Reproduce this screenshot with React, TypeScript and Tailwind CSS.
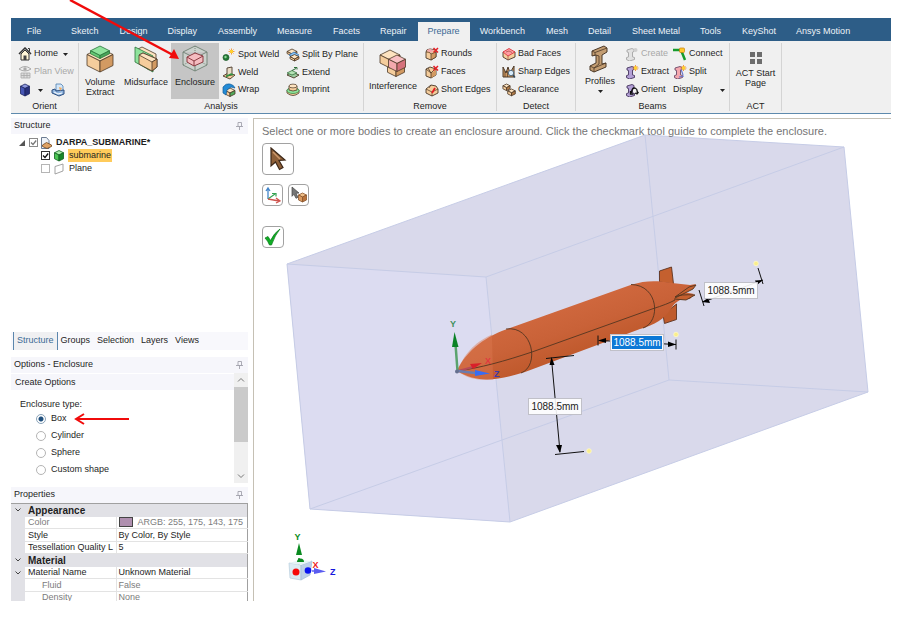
import type { ReactNode } from "react";
import clsx from "clsx";

const PEACH = "#f5cd9c";
const LIGHT = "#fde3c0";
const TAN = "#d29a62";
const INK = "#4b3827";
const GREEN = "#8fe39c";
const PINK = "#f3a9ae";

type BoxProps = { x: number; y: number; w: number; h: number; top?: string; left?: string; right?: string; stroke?: string; sw?: number };

/* Isometric block: x,y is the top corner, w the half width, h the side height. */
function Block({ x, y, w, h, top = LIGHT, left = PEACH, right = TAN, stroke = INK, sw = 0.8 }: BoxProps) {
  const d = w / 2;
  return (
    <g stroke={stroke} strokeWidth={sw} strokeLinejoin="round">
      <path d={`M${x} ${y}l${w} ${d}l${-w} ${d}l${-w} ${-d}z`} fill={top} />
      <path d={`M${x - w} ${y + d}l${w} ${d}v${h}l${-w} ${-d}z`} fill={left} />
      <path d={`M${x + w} ${y + d}l${-w} ${d}v${h}l${w} ${-d}z`} fill={right} />
    </g>
  );
}

function Small({ children }: { children: ReactNode }) {
  return <svg viewBox="0 0 14 14" className="h-[14px] w-[14px] shrink-0" aria-hidden="true">{children}</svg>;
}

function Spark({ x, y }: { x: number; y: number }) {
  return (
    <g>
      <path d={`M${x} ${y - 3}v6M${x - 3} ${y}h6M${x - 2} ${y - 2}l4 4M${x + 2} ${y - 2}l-4 4`} stroke="#f07d1c" strokeWidth="0.8" />
      <circle cx={x} cy={y} r="1.7" fill="#ffd22e" />
    </g>
  );
}

function Beam({ tone, edge }: { tone: string; edge: string }) {
  return (
    <path d="M2 3l5-1.5 2 1v2l-1.5.6v4.8l2 .6v2l-5 1.5-3-1.4v-2l2-.7V5.5L2 5z" fill={tone} stroke={edge} strokeWidth="0.9" strokeLinejoin="round" />
  );
}

const icons = {
  home: (
    <Small>
      <path d="M1 7l6-6 6 6" fill="none" stroke="#333" strokeWidth="1.5" />
      <path d="M3 7l4-4 4 4v6H3z" fill="#fff6d8" stroke="#333" strokeWidth="1" />
      <path d="M5.5 8.500h3V13h-3z" fill="#444" /><path d="M10 1.500h1.500v3" stroke="#333" fill="none" />
    </Small>
  ),
  plan: (
    <Small>
      <path d="M1 4q6-5 12 0q-6 4-12 0z" fill="#eee" stroke="#aaa" /><circle cx="7" cy="4" r="1.700" fill="#aaa" />
      <path d="M3 8h9v5H3zM3 10.500h9M6 8v5M9 8v5" fill="#ddd" stroke="#aaa" strokeWidth="0.8" />
    </Small>
  ),
  blueBox: (
    <Small><Block x={7} y={1} w={4.500} h={7.500} top="#8d98dd" left="#4656b5" right="#27307c" stroke="#1c235e" /></Small>
  ),
  viewBox: (
    <Small>
      <path d="M5 1h5l2 2v5H5z" fill="#d3e6f8" stroke="#4d7fb0" strokeWidth="0.800" />
      <path d="M1 7l3-1 1 2 8-1v4l-5 2-7-3z" fill="#8fb4de" stroke="#2d4f80" strokeWidth="1" />
      <path d="M3 9l4 2 4-1" stroke="#fff" fill="none" /><path d="M8 4l3 1-2 3z" fill="#f2a95c" />
    </Small>
  ),
  spot: (
    <Small>
      <circle cx="4" cy="9.500" r="3" fill="#237a35" stroke="#185425" strokeWidth="0.700" /><circle cx="3.500" cy="9" r="1.200" fill="#8fd49a" />
      <Spark x={9.500} y={3.500} />
    </Small>
  ),
  weld: (
    <Small>
      <path d="M1 10l5-3 7 2-5 4z" fill={PEACH} stroke={INK} strokeWidth="0.900" />
      <path d="M5 2l5-1v8L5 10z" fill="#e9dcc6" stroke={INK} strokeWidth="0.900" /><path d="M4 10.500l5-2.500 2 1" stroke="#2f9442" strokeWidth="1.400" fill="none" />
    </Small>
  ),
  wrap: (
    <Small>
      <Block x={8} y={5} w={5} h={3.500} right="#4fab5a" />
      <path d="M1 4q3-4 7-3 4 1 5 4l-4-1-4 3-1 5-3-2z" fill="#238bd6" stroke="#155d96" strokeWidth="0.700" />
    </Small>
  ),
  split: (
    <Small>
      <Block x={6} y={1} w={5} h={2} /><path d="M3 7l5-3 5 3-5 2.500z" fill="#8ac2f3" stroke="#2d6daa" strokeWidth="0.700" /><Block x={8.500} y={6.500} w={4.500} h={2} />
    </Small>
  ),
  extend: (
    <Small>
      <path d="M1 9l5-3 7 3-5 3z" fill="#9dcda0" stroke={INK} strokeWidth="0.900" />
      <path d="M1 7l5-2.500 5 2.500-5 2z" fill="#b5e3b5" stroke="#35713d" strokeWidth="0.800" /><path d="M6 4.500l4-2M8 1.500h3v2" stroke="#2c6c36" fill="none" />
    </Small>
  ),
  imprint: (
    <Small>
      <path d="M1 7v3q6 5 12 0V7z" fill={PEACH} stroke={INK} strokeWidth="0.800" /><ellipse cx="7" cy="7.500" rx="6" ry="3" fill="#8fe39c" stroke="#378a45" strokeWidth="0.800" />
      <path d="M3 3v4q4 2 8 0V3z" fill={PEACH} stroke={INK} strokeWidth="0.800" /><ellipse cx="7" cy="3" rx="4" ry="1.900" fill={LIGHT} stroke={INK} strokeWidth="0.700" />
    </Small>
  ),
  rounds: (
    <Small>
      <path d="M1 5q0-3 4-3l6 1v7l-5 3-5-2z" fill={PEACH} stroke={INK} strokeWidth="0.900" /><path d="M1 5q4-1 5 2v6l5-3V5L6 7" stroke={INK} strokeWidth="0.700" fill={TAN} /><path d="M2 4q0-2 3-2l4 1-3 3q-1-1-4-2z" fill={PINK} />
      <path d="M8.500 1l4.500 4.500m0-4.500l-4.500 4.500" stroke="#e51e25" strokeWidth="1.500" />
    </Small>
  ),
  faces: (
    <Small>
      <path d="M1 4l4-2 6 2v6l-5 3-5-2z" fill={PEACH} stroke={INK} strokeWidth="0.900" /><path d="M6 13V8l5-3v5z" fill={TAN} /><path d="M1 4l5 4v5M6 8l4-4M3 3l3 5" stroke={INK} strokeWidth="0.800" fill="none" />
      <path d="M8.500 1l4.500 4.500m0-4.500l-4.500 4.500" stroke="#e51e25" strokeWidth="1.500" />
    </Small>
  ),
  edges: (
    <Small>
      <path d="M1 6l5-4 5 1 2 3v4l-6 3-6-3z" fill={PEACH} stroke={INK} strokeWidth="0.900" /><path d="M1 6l6 3v4M7 9l6-3M6 2L4 5" stroke={INK} strokeWidth="0.700" fill="none" />
      <path d="M7 10l3-5" stroke="#e51e25" strokeWidth="1.800" />
    </Small>
  ),
  bad: (
    <Small>
      <path d="M1 5v5l5 3 7-3V5z" fill={PEACH} stroke={INK} strokeWidth="0.900" />
      <path d="M1 5l6-3.500L13 5 6 9z" fill="#ff9da2" stroke="#d9373f" strokeWidth="0.900" /><path d="M4 5l3-1 3 1.500M6 9v4" stroke="#a34b3f" strokeWidth="0.700" fill="none" />
    </Small>
  ),
  sharp: (
    <Small>
      <path d="M1 12V2l3 6 2-6 2 6 4-7v11z" fill={TAN} stroke={INK} strokeWidth="1" /><path d="M3 6v6M5.500 6v6" stroke={INK} strokeWidth="0.700" />
      <circle cx="9" cy="8" r="2.700" fill="#d8ecfb" stroke="#4d6477" strokeWidth="0.900" /><path d="M11 10l2 2.500" stroke="#33495b" strokeWidth="1.500" />
    </Small>
  ),
  clearance: <Small><Block x={4.500} y={1} w={3.600} h={3} right="#b27a45" /><Block x={9.500} y={6} w={3.800} h={3} right="#b27a45" /></Small>,
  create: <Small><Beam tone="#e2e2e2" edge="#a5a5a5" /><circle cx="10.500" cy="3" r="2" fill="#cfcfcf" /></Small>,
  extract: <Small><Beam tone="#b3a0d6" edge="#45345f" /><Spark x={10.500} y={3} /></Small>,
  orient: <Small><Beam tone="#b3a0d6" edge="#45345f" /><path d="M6.500 10q0-5 3.500-5 3 1 2 5M5.500 8v3h3M10 10l2 1 1.500-2" stroke="#111" strokeWidth="1.300" fill="none" /></Small>,
  connect: (
    <Small><path d="M0 3h8l4 10" stroke="#179b2c" strokeWidth="2.500" fill="none" /><rect x="6.500" y="1" width="5" height="4.500" rx="1" fill="#ffc92b" stroke="#c77c0d" strokeWidth="0.700" /></Small>
  ),
  splitBeam: <Small><Beam tone="#f4a8ae" edge="#6c4868" /><path d="M8 4l2 6M6 12l5-1" stroke="#6a78ce" strokeWidth="1.200" /><Spark x={10.500} y={3} /></Small>,
};

type IconName = keyof typeof icons;

function Tool({ icon, label, caret, muted }: { icon?: IconName; label: string; caret?: boolean; muted?: boolean }) {
  return (
    <button type="button" disabled={muted} className={clsx("flex h-[18px] items-center gap-[2px] whitespace-nowrap", muted && "text-[#a8a8a8]")}>
      {icon && icons[icon]}
      <span>{label}</span>
      {caret && <Caret />}
    </button>
  );
}

function Caret() {
  return <svg viewBox="0 0 5 3" className="ml-[3px] h-[3px] w-[5px]" aria-hidden="true"><path d="M0 0h5L2.500 3z" fill="#222" /></svg>;
}

function BigTool({ label, width, active, children, caret }: { label: string; width: string; active?: boolean; children: ReactNode; caret?: boolean }) {
  return (
    <button type="button" className={clsx("flex h-[56px] flex-col items-center leading-[10px]", width, active && "bg-[#c5c5c5]")}>
      {children}
      <span className="flex flex-col items-center">{label}</span>
      {caret && <svg viewBox="0 0 5 3" className="mt-1 h-[3px] w-[5px]" aria-hidden="true"><path d="M0 0h5L2.500 3z" fill="#222" /></svg>}
    </button>
  );
}

function Group({ name, width, children }: { name: string; width: string; children: ReactNode }) {
  return (
    <section aria-label={name} className={clsx("my-[2px] flex shrink-0 flex-col border-r border-[#d4d4d4]", width)}>
      <div className="flex h-[56px]">{children}</div>
      <div className="h-[13px] text-center leading-[15px]">{name}</div>
    </section>
  );
}

const tabs = ["Sketch", "Design", "Display", "Assembly", "Measure", "Facets", "Repair", "Prepare", "Workbench", "Mesh", "Detail", "Sheet Metal", "Tools", "KeyShot", "Ansys Motion"];

function Ribbon() {
  return (
    <header>
      <nav className="flex h-[23px] items-end bg-[#2d5d87] text-[#eef3f8]">
        <button type="button" className="h-[19px] w-[50px] pr-[4px]">File</button>
        {tabs.map((t) => (
          <button type="button" key={t} className={clsx("h-[19px] px-[10px] whitespace-nowrap even:pr-[11px]", t === "Prepare" && "bg-[#f0f0f0] text-[#3b6a95]")}>{t}</button>
        ))}
      </nav>
      <div className="flex h-[73px] border-b border-[#5e8aad] bg-[#f0f0f0]">
        <Group name="Orient" width="w-[68px]">
          <div className="flex flex-col pt-[2px] pl-[7px]">
            <Tool icon="home" label="Home" caret />
            <Tool icon="plan" label="Plan View" muted />
            <div className="flex h-[18px] items-center gap-2">
              <button type="button" aria-label="View cube" className="flex items-center gap-[3px]">{icons.blueBox}<Caret /></button>
              <button type="button" aria-label="Snap view">{icons.viewBox}</button>
            </div>
          </div>
        </Group>
        <Group name="Analysis" width="w-[285px]">
          <BigTool label="Volume Extract" width="w-[42px]">
            <svg viewBox="0 0 30 34" className="h-[34px] w-[30px] shrink-0" aria-hidden="true">
              <Block x={15} y={5} w={13} h={11} />
              <Block x={15} y={3} w={9.500} h={3} top={GREEN} left="#66ca76" right="#4aa65b" stroke="#28733a" />
            </svg>
          </BigTool>
          <BigTool label="Midsurface" width="w-[50px]">
            <svg viewBox="0 0 30 34" className="h-[34px] w-[30px] shrink-0" aria-hidden="true">
              <g stroke={INK} strokeWidth="0.8" strokeLinejoin="round">
                <path d="M5 7l6-3 14 7v12l-7 4L5 18z" fill={LIGHT} />
                <path d="M4 4l18 9v16L4 19z" fill={GREEN} stroke="#28733a" />
                <path d="M8 12l4-2 14 6v8l-5 4L8 21z" fill={PEACH} />
                <path d="M8 12l4-2 14 6-5 3z" fill={LIGHT} /><path d="M21 19l5-3v8l-5 4z" fill={TAN} />
              </g>
            </svg>
          </BigTool>
          <BigTool label="Enclosure" width="w-[48px]" active>
            <svg viewBox="0 0 30 34" className="h-[34px] w-[30px] shrink-0" aria-hidden="true">
              <g fill="none" stroke="#6e8073" strokeWidth="0.9" strokeLinejoin="round">
                <path d="M15 3l12 6v13l-12 6-12-6V9zM3 9l12 6 12-6M15 15v13" fill="#ccd2cd" />
                <path d="M3 22l12-6 12 6M15 3v12" strokeDasharray="1 1" />
              </g>
              <path d="M7 14l8-4 8 3v6l-9 4-7-4z" fill="#f5bcc0" stroke="#8b3940" /><path d="M7 14l7 4 9-5M14 18v5" fill="none" stroke="#8b3940" />
            </svg>
          </BigTool>
          <div className="flex w-[63px] flex-col pt-[3px] pl-[3px]">
            <Tool icon="spot" label="Spot Weld" /><Tool icon="weld" label="Weld" /><Tool icon="wrap" label="Wrap" />
          </div>
          <div className="flex flex-col pt-[3px] pl-[4px]">
            <Tool icon="split" label="Split By Plane" /><Tool icon="extend" label="Extend" /><Tool icon="imprint" label="Imprint" />
          </div>
        </Group>
        <Group name="Remove" width="w-[133px]">
          <BigTool label="Interference" width="w-[58px]">
            <svg viewBox="0 0 30 38" className="h-[38px] w-[30px] shrink-0" aria-hidden="true">
              <Block x={18} y={18} w={8.500} h={7} /><Block x={12} y={7} w={10} h={8} />
              <Block x={19} y={12} w={8.500} h={8} top="#f9c0c4" left={PINK} right="#d5727c" />
            </svg>
          </BigTool>
          <div className="flex flex-col pt-[2px] pl-[3px]">
            <Tool icon="rounds" label="Rounds" /><Tool icon="faces" label="Faces" /><Tool icon="edges" label="Short Edges" />
          </div>
        </Group>
        <Group name="Detect" width="w-[79px]">
          <div className="flex flex-col pt-[2px] pl-[5px]">
            <Tool icon="bad" label="Bad Faces" /><Tool icon="sharp" label="Sharp Edges" /><Tool icon="clearance" label="Clearance" />
          </div>
        </Group>
        <Group name="Beams" width="w-[154px]">
          <BigTool label="Profiles" width="w-[48px]" caret>
            <svg viewBox="0 0 30 33" className="h-[33px] w-[30px] shrink-0" aria-hidden="true">
              <path d="M7 8l12-5 3 2v4l-5 3v9l4-1v4L9 29l-4-2v-4l6-3V12l-4 1z" fill="#c39d72" stroke={INK} strokeWidth="1" strokeLinejoin="round" />
              <path d="M7 8l3 1.500L22 5M10 9.500v3M11 12l3 1v8l-5 4v4M5 23l4 2 12-5" fill="none" stroke={INK} strokeWidth="0.800" />
            </svg>
          </BigTool>
          <div className="flex w-[49px] flex-col pt-[2px] pl-[1px]">
            <Tool icon="create" label="Create" muted /><Tool icon="extract" label="Extract" /><Tool icon="orient" label="Orient" />
          </div>
          <div className="flex flex-1 flex-col pt-[2px]">
            <Tool icon="connect" label="Connect" /><Tool icon="splitBeam" label="Split" />
            <button type="button" className="flex h-[18px] items-center justify-between pr-1">Display<Caret /></button>
          </div>
        </Group>
        <Group name="ACT" width="w-[52px]">
          <BigTool label="ACT Start Page" width="w-[51px]">
            <svg viewBox="0 0 12 25" className="h-[25px] w-[12px] shrink-0" aria-hidden="true"><path d="M0 9h5v5H0zM7 9h5v5H7zM0 16h5v5H0zM7 16h5v5H7z" fill="#6d6d6d" /></svg>
          </BigTool>
        </Group>
      </div>
    </header>
  );
}

function PanelHead({ title }: { title: string }) {
  return (
    <div className="flex h-4 shrink-0 items-center justify-between bg-[#f6f6fb] pr-[5px] pl-[3px]">
      <h2>{title}</h2>
      <button type="button" aria-label={`Pin ${title}`}>
        <svg viewBox="0 0 7 8" className="h-[8px] w-[7px]" aria-hidden="true"><path d="M2 .5h3.500v4H2zM0 4.500h7M3.500 4.500V8" fill="none" stroke="#a3a3ad" strokeWidth="0.900" /></svg>
      </button>
    </div>
  );
}

function Tick({ label, checked, faded }: { label: string; checked?: boolean; faded?: boolean }) {
  return (
    <span className="relative flex">
      <input type="checkbox" aria-label={label} defaultChecked={checked} className={clsx("h-[9px] w-[9px] appearance-none border bg-white", faded ? "border-[#8a8a8a]" : checked ? "border-[#333]" : "border-[#b5b5b5]")} />
      {checked && <svg viewBox="0 0 9 9" className="pointer-events-none absolute inset-0" aria-hidden="true"><path d="M2 4.500l2 2L7.200 2.500" fill="none" stroke={faded ? "#777" : "#111"} strokeWidth="1.300" /></svg>}
    </span>
  );
}

function Structure() {
  return (
    <section className="flex min-h-0 flex-1 flex-col">
      <PanelHead title="Structure" />
      <div className="flex-1 pt-[2px]">
        <div className="flex h-[13px] items-center pl-[8px]">
          <svg viewBox="0 0 6 6" className="mr-1 h-[6px] w-[6px]" aria-hidden="true"><path d="M6 0v6H0z" fill="#555" /></svg>
          <Tick label="DARPA_SUBMARINE" checked faded />
          <svg viewBox="0 0 12 12" className="mx-[2px] h-[12px] w-[12px]" aria-hidden="true">
            <path d="M1.500.5h5l2.500 3v8H1.500z" fill="#eef2f8" stroke="#5b6c84" strokeWidth="0.900" /><path d="M2.500 8l4-2.500 5 2.500v1.500L7 11.500 2.500 9.500z" fill="#dfa265" stroke="#70461f" strokeWidth="0.800" />
          </svg>
          <b className="ml-[2px]">DARPA_SUBMARINE*</b>
        </div>
        <div className="flex h-[13px] items-center pl-[30px]">
          <Tick label="submarine" checked />
          <svg viewBox="0 0 12 12" className="mx-[3px] h-[12px] w-[12px]" aria-hidden="true"><Block x={6} y={0.500} w={4.500} h={6} top="#a9eda9" left="#4cc654" right="#17872a" stroke="#0f6120" /></svg>
          <span className="bg-[#ffcb5b] px-px leading-[13px]">submarine</span>
        </div>
        <div className="flex h-[13px] items-center pl-[30px]">
          <Tick label="Plane" />
          <svg viewBox="0 0 12 12" className="mx-[3px] h-[12px] w-[12px]" aria-hidden="true"><path d="M2 3.500L10 1v7L2 11z" fill="#fff" stroke="#999" strokeWidth="0.900" /></svg>
          <span className="px-px">Plane</span>
        </div>
      </div>
      <nav className="mb-[7px] flex h-[18px] items-center gap-[3px] bg-[#f8f8fc] pl-[2px]">
        <button type="button" className="h-[18px] border-x border-[#5b86ad] bg-[#f0f0f2] px-[3px] text-[#3b6a95]">Structure</button>
        <div className="flex gap-[7px]">
          {["Groups", "Selection", "Layers", "Views"].map((t) => <button type="button" key={t}>{t}</button>)}
        </div>
      </nav>
    </section>
  );
}

function Options() {
  return (
    <section>
      <PanelHead title="Options - Enclosure" />
      <div className="flex h-[110px]">
        <div className="flex-1">
          <h3 className="mt-px bg-[#f6f6fb] pl-1 leading-4">Create Options</h3>
          <fieldset className="pt-[8px] pl-[9px]">
            <legend className="float-left w-full leading-[12px]">Enclosure type:</legend>
            <div className="clear-both flex flex-col pl-4">
              {["Box", "Cylinder", "Sphere", "Custom shape"].map((t) => (
                <label key={t} className="flex h-[17px] items-center gap-[5px]">
                  <input type="radio" name="enclosure" defaultChecked={t === "Box"} className="h-[10px] w-[10px] appearance-none rounded-full border border-[#b4b4b4] bg-white checked:border-[#8ba4ba] checked:bg-[radial-gradient(circle,#1f4f7d_0_2px,transparent_3px)]" />
                  {t}
                </label>
              ))}
            </div>
          </fieldset>
        </div>
        <div className="flex w-[14px] flex-col items-center bg-[#f0f0f0]">
          <svg viewBox="0 0 14 14" className="h-[14px] w-[14px]" aria-hidden="true"><path d="M4 8.500l3-3 3 3" fill="none" stroke="#777" /></svg>
          <div className="h-[55px] w-full bg-[#cacaca]" />
          <svg viewBox="0 0 14 14" className="mt-auto h-[14px] w-[14px]" aria-hidden="true"><path d="M4 5.500l3 3 3-3" fill="none" stroke="#777" /></svg>
        </div>
      </div>
    </section>
  );
}

type Row = { name: string; value?: ReactNode; head?: boolean; fold?: boolean; muted?: boolean; indent?: boolean };

const rows: Row[] = [
  { name: "Appearance", head: true, fold: true },
  { name: "Color", muted: true, value: <span className="flex items-center gap-[5px]"><i className="h-[10px] w-[14px] border border-[#444] bg-[#af8faf]" />ARGB: 255, 175, 143, 175</span> },
  { name: "Style", value: "By Color, By Style" },
  { name: "Tessellation Quality L", value: "5" },
  { name: "Material", head: true, fold: true },
  { name: "Material Name", value: "Unknown Material", fold: true },
  { name: "Fluid", value: "False", muted: true, indent: true },
  { name: "Density", value: "None", muted: true, indent: true },
];

function Properties() {
  return (
    <section className="mt-[4px] h-[114px] shrink-0 overflow-hidden">
      <PanelHead title="Properties" />
      <table className="w-full table-fixed border-collapse border-t border-r border-[#a0a0a0] text-left">
        <colgroup><col className="w-[14px]" /><col className="w-[91px]" /><col /></colgroup>
        <tbody>
          {rows.map((r) => (
            <tr key={r.name} className={clsx("h-[13px] leading-[11px] even:h-[12px]", r.muted && "text-[#7c7c7c]")}>
              <td className="bg-[#e1e1e6] p-0 text-center">
                {r.fold && <svg viewBox="0 0 6 4" className="mx-auto h-[4px] w-[6px]" aria-hidden="true"><path d="M.5.500L3 3 5.500.500" fill="none" stroke="#444" /></svg>}
              </td>
              {r.head ? (
                <th colSpan={2} className="bg-[#e1e1e6] p-0 pl-[3px] text-[10px]">{r.name}</th>
              ) : (
                <>
                  <td className={clsx("overflow-hidden border-r border-b border-[#e3e3e3] p-0 whitespace-nowrap", r.indent ? "pl-[17px]" : "pl-[3px]")}>{r.name}</td>
                  <td className="overflow-hidden border-b border-[#e3e3e3] p-0 pl-[2px] whitespace-nowrap">{r.value}</td>
                </>
              )}
            </tr>
          ))}
        </tbody>
      </table>
    </section>
  );
}

function Scene() {
  return (
    <svg viewBox="254 119 637 482" className="absolute top-0 left-0 h-[482px] w-[637px]" role="img" aria-label="Submarine inside a box enclosure">
      <defs>
        <linearGradient id="hull" gradientUnits="userSpaceOnUse" x1="560" y1="300" x2="580" y2="360">
          <stop offset="0" stopColor="#d1693f" /><stop offset="0.500" stopColor="#c96238" /><stop offset="1" stopColor="#bd5729" />
        </linearGradient>
      </defs>
      <path d="M287 264L645 135l199 12 24 245-358 130-200-13z" fill="#d9d9eb" />
      <path d="M287 264l199 13 24 245-200-13z" fill="#dcdcf1" />
      <g fill="none" stroke="#c6cce6" strokeWidth="1">
        <path d="M287 264l199 13 24 245-200-13zM486 277L844 147M310 509l359-129 199 12M645 135l24 245M287 264L645 135l199 12 24 245-358 130" />
      </g>
      <g stroke="#5d3320" strokeWidth="0.9" strokeLinejoin="round">
        <path d="M659.500 271l12-4 2 17-14-2z" fill="#c4602f" />
        <path d="M663 315l1.500 8.500 12-4V304z" fill="#bf5b2c" />
      </g>
      <path d="M457 371C466 350 488 335 510 328L632 284.500C644 281 655 280 672 283L690 285 696 284 692 289 684 292 694 294 690 299 680 300Q674 303 671 309C664 319 655 325 640 329L525 372C500 380 478 384 457 371z" fill="url(#hull)" />
      <path d="M457 371C466 350 478 341 492 334.500L493 379.500C480 381 468 379 457 371z" fill="#dc7850" opacity="0.450" />
      <g fill="none" stroke="#533620" strokeWidth="0.9">
        <path d="M457 371C480 368 505 361 532 352L652 309Q668 304 675 300M506 329C533 325 540 366 521 373M631 284.500C659 285 661 322 643 328" />
        <path d="M675 297l14-10 7-2-3 4-18 9M675 297q5-3 20-2l-9 5-12-1" fill="#c4602f" />
      </g>
      <g strokeLinecap="round">
        <path d="M457.500 371l-2-27" stroke="#5aa36e" strokeWidth="2.500" /><path d="M454.500 332l4 15h-6.500z" fill="#0a8226" />
        <path d="M458 371l15-4" stroke="#b74b57" strokeWidth="2" /><path d="M482 363l-12 1 3 5z" fill="#d8202a" />
        <path d="M458 371l17 2" stroke="#6b7cae" strokeWidth="2.500" /><path d="M490 373.500l-15-3.500v6z" fill="#376cf4" /><circle cx="457" cy="371.500" r="2" fill="#65708f" />
      </g>
      <g className="font-['Liberation_Sans',sans-serif] text-[9px] font-bold">
        <text x="450" y="327" fill="#3f8f5b">Y</text><text x="485" y="364" fill="#e0393f">X</text><text x="494" y="377" fill="#3c3aa9">Z</text>
      </g>
      <g stroke="#111" strokeWidth="1" fill="none">
        <path d="M546 358.500l28-3M551.500 359l8.500 93M555 454.500l29-3M598 335.500v10M600 340.500l76 4M676 339.500v10M699 290l5 16M703 302l60-22M758 268l5 16" />
      </g>
      <path d="M551.500 357l3 8h-5zM560 453l-4-8h6zM598 340.500l8-2.500v5zM676 344.500l-8-3v5.500zM702 302l6-4 2 5zM763 280l-8 .5 2 4.500z" fill="#000" />
      <g fill="#f9ee8c" stroke="#fff9c8" strokeWidth="0.800"><circle cx="756" cy="263.500" r="2.300" /><circle cx="676" cy="334.500" r="2.300" /><circle cx="589" cy="451" r="2.300" /></g>
      <g>
        <path d="M299 568v-10" stroke="#0a8a20" strokeWidth="1.500" /><path d="M299 543l3 12h-6z" fill="#0a8a20" />
        <path d="M289 563l12 2v15l-11-2z" fill="#dcecf4" stroke="#b7cddd" strokeWidth="0.700" /><path d="M301 565l11-4-2 14-9 5z" fill="#bdd0e8" stroke="#a4bcd6" strokeWidth="0.700" /><path d="M289 563l11-3 12 1-11 4z" fill="#e6f4f6" />
        <path d="M297 562a3.500 3.500 0 017 0z" fill="#0a8a20" /><circle cx="296" cy="572" r="3.500" fill="#f60a0a" /><circle cx="308" cy="570.500" r="3.300" fill="#0a14f0" />
        <path d="M312 571h5" stroke="#5a5cf0" strokeWidth="1.500" /><path d="M326 571.500l-12-3.500v6z" fill="#5a5cf0" />
      </g>
      <g className="font-['Liberation_Sans',sans-serif] text-[9px] font-bold">
        <text x="294.500" y="540" fill="#0a8a20">Y</text><text x="312.500" y="568" fill="#ef2020">X</text><text x="330" y="575" fill="#1616dd">Z</text>
      </g>
    </svg>
  );
}

const guide = "flex items-center justify-center rounded-[4px] border border-[#a2a2a2] bg-white";

function Dimension({ place, label, selected }: { place: string; label: string; selected?: boolean }) {
  return (
    <div className={clsx("absolute flex h-[17px] w-[54px] items-center border border-[#c0c0c8] bg-white/90 px-px", place)}>
      <input aria-label={label} defaultValue="1088.5mm" className={clsx("h-[13px] w-full text-center text-[10px] leading-[13px]", selected ? "bg-[#0c78d6] text-white" : "text-[#222]")} />
    </div>
  );
}

function Viewport() {
  return (
    <main className="relative min-w-0 flex-1 overflow-hidden border-t border-l border-[#c5c0b4] pl-2">
      <Scene />
      <div className="relative flex flex-col">
        <p className="text-[11px] leading-6 whitespace-nowrap text-[#757575]">Select one or more bodies to create an enclosure around. Click the checkmark tool guide to complete the enclosure.</p>
        <button type="button" aria-label="Select" className={clsx(guide, "h-8 w-8")}>
          <svg viewBox="0 0 20 24" className="h-6 w-5" aria-hidden="true"><path d="M3 1l14 12-6 .5 4 7-3.500 2-4-7.500L3 19z" fill="#8d5f38" stroke="#3d2818" strokeWidth="1.200" /><path d="M5 5l7 7" stroke="#cb986a" strokeWidth="1.500" /></svg>
        </button>
        <div className="mt-[9px] flex gap-[5px]">
          <button type="button" aria-label="Orient enclosure" className={clsx(guide, "h-[22px] w-[21px]")}>
            <svg viewBox="0 0 18 18" className="h-[18px] w-[18px]" aria-hidden="true"><path d="M4 13V3M2 5l2-3 2 3" stroke="#4385ca" strokeWidth="1.300" fill="none" /><path d="M4 13l7-5M8 7.500h4v3" stroke="#35a353" strokeWidth="1.200" fill="none" /><path d="M4 13l11 2M12 12l4 3-4 2" stroke="#ce534d" strokeWidth="1.300" fill="none" /></svg>
          </button>
          <button type="button" aria-label="Select bodies" className={clsx(guide, "h-[22px] w-[21px]")}>
            <svg viewBox="0 0 18 18" className="h-[18px] w-[18px]" aria-hidden="true"><path d="M2 1l7 6-3 .3 2 4-2 1-2-4-2 2z" fill="#777" stroke="#444" strokeWidth="0.700" /><Block x={12.500} y={7} w={4} h={5} top="#eebd88" left="#d99a60" right="#b9733c" stroke="#8a552c" /></svg>
          </button>
        </div>
        <button type="button" aria-label="Complete" className={clsx(guide, "mt-5 h-[22px] w-[22px]")}>
          <svg viewBox="0 0 18 18" className="h-[18px] w-[18px]" aria-hidden="true"><path d="M1 10l3-1.500 2.500 4Q10 5 16 1 11 7 7.500 17H5.500Q4 13 1 10z" fill="#0fae25" stroke="#087518" strokeWidth="0.700" /></svg>
        </button>
      </div>
      <Dimension label="Z offset" place="top-[163px] left-[450px]" />
      <Dimension label="X offset" place="top-[215px] left-[356px]" selected />
      <Dimension label="Y offset" place="top-[279px] left-[274px]" />
    </main>
  );
}

export default function App() {
  return (
    <div className="relative flex h-screen flex-col overflow-hidden bg-white pt-[18px] pr-[25px] pb-[43px] pl-[11px] font-['Liberation_Sans',Arial,sans-serif] text-[9px] text-[#1e1e1e]">
      <Ribbon />
      <div className="flex min-h-0 flex-1 pt-[4px]">
        <aside className="mr-[5px] flex w-[237px] shrink-0 flex-col"><Structure /><Options /><Properties /></aside>
        <Viewport />
      </div>
      <svg viewBox="0 0 916 644" className="pointer-events-none absolute top-0 left-0 h-[644px] w-[916px]" aria-hidden="true">
        <path d="M70 0l103 55" stroke="#f00b0b" strokeWidth="2.500" /><path d="M179 59l-5-10-5 9z" fill="#f00b0b" />
        <path d="M129 419H77M84 414l-8 5 8 5" fill="none" stroke="#f00b0b" strokeWidth="2" />
      </svg>
    </div>
  );
}
